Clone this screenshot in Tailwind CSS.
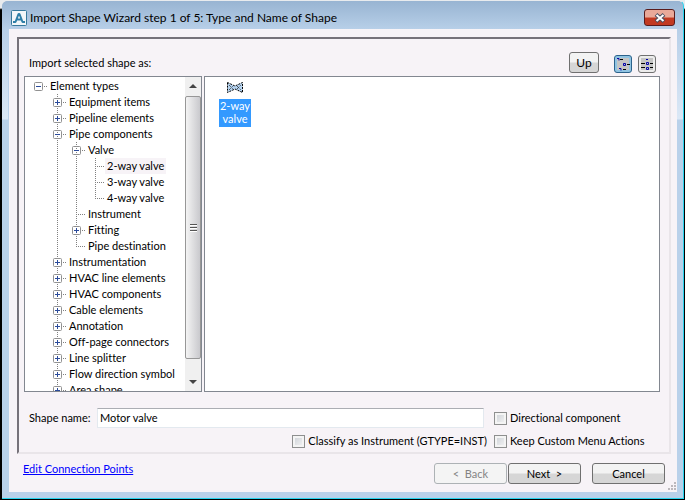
<!DOCTYPE html>
<html lang="en">
<head>
<meta charset="utf-8">
<title>Import Shape Wizard</title>
<script src="https://cdn.jsdelivr.net/npm/@tailwindcss/browser@4"></script>
</head>
<body class="h-screen overflow-hidden bg-linear-to-b from-[#e8ebee] from-[8px] to-black to-[10px] font-[Lato,'Liberation_Sans',sans-serif] text-[11px] leading-4 text-black [font-variant-ligatures:none]">
<svg class="hidden">
  <defs>
    <linearGradient id="box" x1="0" y1="0" x2="1" y2="1"><stop offset="0" stop-color="#fff"/><stop offset="1" stop-color="#d4d4d4"/></linearGradient>
    <symbol id="v" viewBox="0 0 19 16"><path d="M9.500 0V16" stroke="#808080" stroke-dasharray="1 1"/></symbol>
    <symbol id="h" viewBox="0 0 19 16"><path d="M9 8.500H19" stroke="#808080" stroke-dasharray="1 1"/></symbol>
    <symbol id="t" viewBox="0 0 19 16"><use href="#v"/><use href="#h"/></symbol>
    <symbol id="e" viewBox="0 0 19 16"><path d="M9.500 0V9" stroke="#808080" stroke-dasharray="1 1"/><use href="#h"/></symbol>
    <symbol id="m" viewBox="0 0 19 16"><use href="#h"/><rect x="5.500" y="4.500" width="8" height="8" rx="1" fill="url(#box)" stroke="#919191"/><path d="M7 8.500h5" stroke="#2b4b9b"/></symbol>
    <symbol id="p" viewBox="0 0 19 16"><use href="#m"/><path d="M9.500 6v5" stroke="#2b4b9b"/></symbol>
    <symbol id="vm" viewBox="0 0 19 16"><use href="#v"/><use href="#m"/></symbol>
    <symbol id="vp" viewBox="0 0 19 16"><use href="#v"/><use href="#p"/></symbol>
    <symbol id="n" viewBox="0 0 19 16"></symbol>
  </defs>
</svg>
<div class="flex h-full flex-col pl-[2px] pr-px pb-px">
  <div class="flex min-h-0 flex-1 flex-col rounded-t-md border-r border-b border-t border-t-[#e8ebee] border-r-[#27d3ee] border-b-[#27d3ee] bg-[linear-gradient(#98b4d2_0px,#b7cfe8_28px,#dbe8f6_118px,#b9d1ea_119px)] px-[6px] pb-[6px]">
    <header class="-mx-[6px] flex h-7 shrink-0 items-center rounded-t-md bg-linear-to-b from-[#98b4d2] to-[#b7cfe8] pl-[9px] pr-2 pt-[5px]">
      <svg class="size-4 shrink-0" viewBox="0 0 16 16"><rect x=".5" y=".5" width="15" height="15" rx="1" fill="#f2f6f9" stroke="#37799c"/><path d="M2 12h2.500L7.500 4h1l3 8H14M5 9.500h6" fill="none" stroke="#2f7fa8" stroke-width="2" stroke-linejoin="bevel"/></svg>
      <h1 class="ml-[3px] flex-1 whitespace-nowrap text-[12px]">Import Shape Wizard step 1 of 5: Type and Name of Shape</h1>
      <button aria-label="Close" class="flex h-[17px] w-[31px] items-center justify-center rounded-[3px] border border-[#5a1c1c] bg-linear-to-b from-[#e9a999] from-45% to-[#c23a22] to-55%">
        <svg class="h-[10px] w-3" viewBox="0 0 12 10"><path d="M2 1.500l8 7M10 1.500l-8 7" stroke="#4b4f60" stroke-width="4"/><path d="M2.500 2l7 6M9.500 2l-7 6" stroke="#fff" stroke-width="2"/></svg>
      </button>
    </header>
    <main class="flex min-h-0 flex-1 flex-col border-l border-[#b9d1ea] bg-[#f7f3f7] pt-2">
      <section class="ml-2 mr-[6px] flex min-h-0 flex-1 flex-col border-2 border-t-[#76727a] border-l-[#76727a] border-r-[#e9e5e9] border-b-[#e9e5e9] pl-[5px] pr-[9px]">
        <div class="flex h-[37px] shrink-0 items-end pb-[3px] pl-[5px]">
          <span class="flex-1 pb-[2px]">Import selected shape as:</span>
          <button class="mr-[15px] h-[21px] w-[30px] rounded-[3px] border border-[#707070] bg-linear-to-b from-[#f3f3f3] from-45% to-[#d6d6d6] to-55% text-[12px]">Up</button>
          <button aria-label="Tree view" class="mr-[6px] flex size-[18px] items-center justify-center rounded-[3px] border border-[#2c628b] bg-[#90c4e2]">
            <svg class="size-[14px] shrink-0" viewBox="0 0 14 14"><path d="M1 1h12v12H1z" fill="#c4c4c4"/><path d="M4 2.500h3M11 7.500h3M7 12.500h3" stroke="#000"/><path d="M1 1.500h2v2M7.500 6.500h2v2h-2zM3 11.500h2v2" fill="none" stroke="#00a"/></svg>
          </button>
          <button aria-label="List view" class="mr-[4px] flex size-[18px] items-center justify-center rounded-[3px] border border-[#707070] bg-[#ececec]">
            <svg class="size-[14px] shrink-0" viewBox="0 0 14 14"><path d="M1 1h12v12H1z" fill="#c4c4c4"/><path d="M1 6.500h4M10 6.500h3M1 10.500h4M10 10.500h3" stroke="#000"/><path d="M6 2.500h2M6.500 5.500h2v2h-2zM6.500 10.500h2v2h-2z" fill="none" stroke="#00a"/></svg>
          </button>
        </div>
        <div class="flex min-h-0 flex-1 gap-[2px]">
          <div class="flex w-[178px] shrink-0 border border-[#828790] bg-white">
            <ul id="tree" role="tree" class="min-w-0 flex-1 overflow-hidden pl-1 pt-px"></ul>
            <div class="flex w-4 flex-col items-center bg-[#f0f0f0]">
              <svg class="h-[19px] w-4 shrink-0" viewBox="0 0 16 19"><path d="M8 7l4 4H4z" fill="#444"/></svg>
              <div class="flex w-full flex-1 flex-col items-center justify-center gap-px rounded-[2px] border border-[#979797] bg-linear-to-r from-[#f4f4f4] to-[#c9c9cd]">
                <i class="h-[2px] w-[7px] border-t border-[#555] bg-white"></i>
                <i class="h-[2px] w-[7px] border-t border-[#555] bg-white"></i>
                <i class="h-[2px] w-[7px] border-t border-[#555] bg-white"></i>
              </div>
              <svg class="h-8 w-4 shrink-0" viewBox="0 0 16 32"><path d="M4 21h8l-4 4z" fill="#444"/></svg>
            </div>
          </div>
          <div class="min-w-0 flex-1 border border-[#828790] bg-white pl-[14px] pt-[5px]">
            <figure class="flex w-8 flex-col items-center">
              <svg class="h-[11px] w-4" viewBox="0 0 16 11"><path d="M.5.500L8 4l7.500-3.500v10L8 7 .5 10.500z" fill="#b5d3f0" stroke="#000" stroke-dasharray="2 1"/><path d="M2 3l4 4M2 8l4-4M10 4l4 4M10 7l4-4" stroke="#222" stroke-dasharray="1 1"/></svg>
              <figcaption class="mt-[6px] w-full bg-[#3399ff] pb-[2px] text-center leading-[13px] text-white">2-way<br>valve</figcaption>
            </figure>
          </div>
        </div>
        <div class="grid shrink-0 grid-cols-[1fr_166px] gap-x-[10px] pl-[5px] pt-4">
          <div class="flex items-center">
            <label for="nm" class="w-[68px] shrink-0">Shape name:</label>
            <input id="nm" value="Motor valve" class="h-5 min-w-0 flex-1 border border-[#e3e9ef] border-t-[#abadb3] bg-white px-[2px] pb-[2px] outline-none">
          </div>
          <label class="flex items-center gap-[3px] whitespace-nowrap"><input type="checkbox" class="size-[13px] appearance-none border border-[#8e8f8f] bg-linear-to-br from-[#cbcfd5] to-[#f6f6f6] ring-2 ring-[#f4f4f4] ring-inset">Directional component</label>
          <label class="flex h-6 items-center justify-end gap-[3px] whitespace-nowrap -mr-[3px] pt-[2px]"><input type="checkbox" class="size-[13px] appearance-none border border-[#8e8f8f] bg-linear-to-br from-[#cbcfd5] to-[#f6f6f6] ring-2 ring-[#f4f4f4] ring-inset">Classify as Instrument (GTYPE=INST)</label>
          <label class="flex h-6 items-center gap-[3px] whitespace-nowrap pt-[2px]"><input type="checkbox" class="size-[13px] appearance-none border border-[#8e8f8f] bg-linear-to-br from-[#cbcfd5] to-[#f6f6f6] ring-2 ring-[#f4f4f4] ring-inset">Keep Custom Menu Actions</label>
        </div>
      </section>
      <footer class="flex h-[38px] shrink-0 items-start pl-[14px] pt-[9px]">
        <a href="#" class="flex-1 leading-3 text-[#0000ff] underline">Edit Connection Points</a>
        <button disabled class="h-[21px] w-[73px] rounded-[3px] border border-[#adb2b5] bg-[#f4f4f4] text-[#838383]">&lt;&nbsp; Back</button>
        <button class="ml-px h-[21px] w-[73px] rounded-[3px] border border-[#707070] bg-linear-to-b from-[#f3f3f3] from-45% to-[#d6d6d6] to-55%">Next &nbsp;&gt;</button>
        <button class="ml-[11px] h-[21px] w-[73px] rounded-[3px] border border-[#707070] bg-linear-to-b from-[#f3f3f3] from-45% to-[#d6d6d6] to-55%">Cancel</button>
        <svg class="ml-[3px] mr-px size-2 self-end mb-[2px] shrink-0" viewBox="0 0 8 8"><path d="M6 0h2v2H6zM3 3h2v2H3zM6 3h2v2H6zM0 6h2v2H0zM3 6h2v2H3zM6 6h2v2H6z" fill="#bcb8bc"/></svg>
      </footer>
    </main>
  </div>
</div>
<script>
// Each row: guide cells from the left, then the label
const rows = [
  ['m', 'Element types'], ['n vp', 'Equipment items'], ['n vp', 'Pipeline elements'], ['n vm', 'Pipe components'],
  ['n v vm', 'Valve'], ['n v v t', '2-way valve'], ['n v v t', '3-way valve'], ['n v v e', '4-way valve'],
  ['n v t', 'Instrument'], ['n v vp', 'Fitting'], ['n v e', 'Pipe destination'], ['n vp', 'Instrumentation'],
  ['n vp', 'HVAC line elements'], ['n vp', 'HVAC components'], ['n vp', 'Cable elements'], ['n vp', 'Annotation'],
  ['n vp', 'Off-page connectors'], ['n vp', 'Line splitter'], ['n vp', 'Flow direction symbol'], ['n vp', 'Area shape']
];
document.getElementById('tree').innerHTML = rows.map(([cells, label], i) =>
  `<li role="treeitem" class="flex h-4 whitespace-nowrap">${cells.split(' ').map(c =>
    `<svg class="h-4 w-[19px] shrink-0"><use href="#${c}"/></svg>`).join('')}<span class="px-[2px] ${i === 5 ? 'bg-[#f7f3f7]' : ''}">${label}</span></li>`).join('');
</script>
</body>
</html>
